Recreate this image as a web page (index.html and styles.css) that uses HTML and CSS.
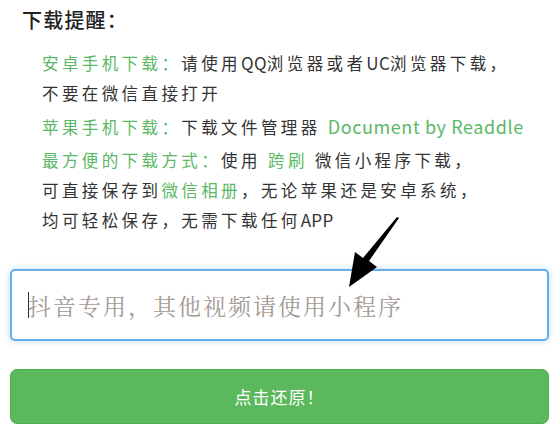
FILE: index.html
```html
<!DOCTYPE html>
<html>
<head>
    <meta charset="UTF-8">
    <meta name="viewport" content="width=device-width, initial-scale=1.0">
    <title>下载提醒</title>
    <link rel="stylesheet" href="styles.css">
</head>
<body>
    <div class="notice">
        <h2 class="notice-title">下载提醒：</h2>
        <div class="notice-body">
            <p><span class="green">安卓手机下载：</span>请使用<span class="en">QQ</span>浏览器或者<span class="en">UC</span>浏览器下载，<br>不要在微信直接打开</p>
            <p><span class="green">苹果手机下载：</span>下载文件管理器 <span class="green en wide">Document by Readdle</span></p>
            <p><span class="green">最方便的下载方式：</span>使用 <span class="green">跨刷</span> 微信小程序下载，<br>可直接保存到<span class="green">微信相册</span>，无论苹果还是安卓系统，<br>均可轻松保存，无需下载任何<span class="en">APP</span></p>
        </div>
    </div>

    <div class="form">
        <div class="input-wrap">
            <input type="text" id="video-url" class="url-input" placeholder="抖音专用，其他视频请使用小程序">
            <span class="caret"></span>
            <svg class="arrow" width="70" height="70" viewBox="0 0 70 70">
                <path d="M68 1 L38 44 L46 50 L18 70 L24 35 L32 41 L66 0 Z" fill="#000"/>
            </svg>
        </div>
        <button id="restore-btn" class="restore-btn">点击还原！</button>
    </div>
</body>
</html>
```

FILE: styles.css
```css
body {
    margin: 0;
    font-family: "Noto Sans CJK SC", "Noto Sans", sans-serif;
    background-color: #fff;
    color: #333;
}

.notice {
    padding: 5px 0 0 22px;
}

.notice-title {
    margin: 0;
    font-size: 20px;
    font-weight: 500;
    letter-spacing: 1.2px;
    color: #222;
    line-height: 30px;
}

.notice-body {
    padding-left: 20px;
    margin-top: 13px;
}

.notice-body p {
    margin: 0 0 3px 0;
    font-size: 16.5px;
    line-height: 30px;
    letter-spacing: 3.4px;
    color: #333;
}

.notice-body .en {
    letter-spacing: 0.3px;
    font-size: 17px;
}

.notice-body .wide {
    font-size: 18px;
    letter-spacing: 0.6px;
}

.green {
    color: #5ab866;
}

.form {
    padding: 0 10px;
    margin-top: 34px;
}

.input-wrap {
    position: relative;
}

.url-input {
    display: block;
    box-sizing: border-box;
    width: 100%;
    height: 72px;
    padding: 0 16px;
    border: 2px solid #66aeea;
    border-radius: 5px;
    box-shadow: 0 0 6px rgba(102, 174, 234, 0.45);
    font-family: "Noto Serif CJK SC", "Noto Sans CJK SC", serif;
    font-size: 23px;
    color: #333;
    outline: none;
}

.url-input::placeholder {
    color: #a39a94;
    letter-spacing: 2px;
}

.caret {
    position: absolute;
    left: 18px;
    top: 23px;
    width: 1px;
    height: 26px;
    background-color: #333;
}

.arrow {
    position: absolute;
    left: 321px;
    top: -52px;
}

.restore-btn {
    display: block;
    width: 100%;
    height: 55px;
    margin-top: 28px;
    background-color: #5cb85c;
    border: 1px solid #4cae4c;
    border-radius: 7px;
    color: #fff;
    font-family: "Noto Sans CJK SC", serif;
    font-size: 17px;
    letter-spacing: 1px;
}
```
